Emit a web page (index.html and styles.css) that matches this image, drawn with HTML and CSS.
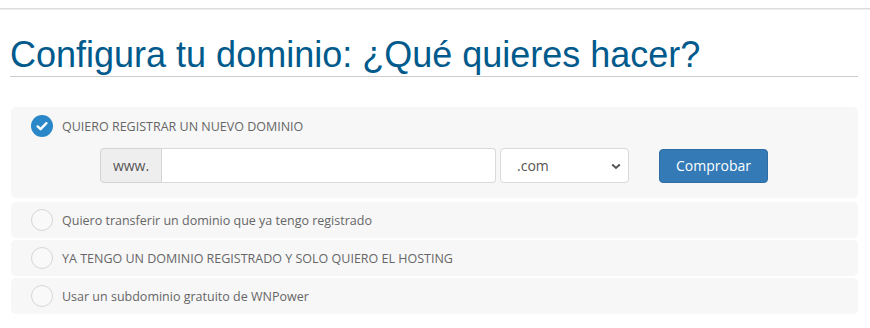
FILE: index.html
```html
<!DOCTYPE html>
<html lang="es">
<head>
  <meta charset="UTF-8" />
  <title>Configura tu dominio</title>
  <link rel="stylesheet" href="styles.css">
</head>
<body>
  <div class="topbar"></div>

  <div class="wrap">
    <h1 class="page-title">Configura tu dominio: ¿Qué quieres hacer?</h1>

    <div class="option option-open">
      <label class="option-head">
        <span class="check">
          <svg width="22" height="22" viewBox="0 0 22 22">
            <circle cx="11" cy="11" r="11" fill="#2b88c8" />
            <path d="M6.6 11.4 L9.6 14.2 L15.4 8.2" fill="none" stroke="#fff" stroke-width="2.4" stroke-linecap="round" stroke-linejoin="round" />
          </svg>
        </span>
        <span class="option-text">QUIERO REGISTRAR UN NUEVO DOMINIO</span>
      </label>

      <div class="domain-row">
        <div class="input-group">
          <span class="addon">www.</span>
          <input type="text" class="domain-input" />
        </div>
        <div class="select-wrap">
          <select class="tld">
            <option>.com</option>
            <option>.net</option>
            <option>.org</option>
          </select>
          <svg class="chevron" width="10" height="7" viewBox="0 0 10 7">
            <path d="M1.2 1.5 L5 5 L8.8 1.5" fill="none" stroke="#555" stroke-width="2" />
          </svg>
        </div>
        <button type="button" class="btn-check">Comprobar</button>
      </div>
    </div>

    <div class="option">
      <label class="option-head">
        <span class="radio"></span>
        <span class="option-text">Quiero transferir un dominio que ya tengo registrado</span>
      </label>
    </div>

    <div class="option">
      <label class="option-head">
        <span class="radio"></span>
        <span class="option-text">YA TENGO UN DOMINIO REGISTRADO Y SOLO QUIERO EL HOSTING</span>
      </label>
    </div>

    <div class="option">
      <label class="option-head">
        <span class="radio"></span>
        <span class="option-text">Usar un subdominio gratuito de WNPower</span>
      </label>
    </div>
  </div>
</body>
</html>
```

FILE: styles.css
```css
*, *::before, *::after { box-sizing: border-box; }

body {
  margin: 0;
  padding-top: 8px;
  font-family: 'Open Sans', 'Liberation Sans', sans-serif;
  background-color: #ffffff;
  color: #555;
}

.topbar {
  height: 2px;
  border-top: 1px solid #dcdcdc;
  border-bottom: 1px solid #ededed;
}

.wrap {
  width: 847px;
  margin-left: 11px;
}

.page-title {
  margin: 25px 0 0 -1px;
  padding-bottom: 1px;
  border-bottom: 1px solid #cccccc;
  font-family: 'Liberation Sans', Arial, sans-serif;
  font-weight: normal;
  font-size: 36px;
  line-height: 40px;
  color: #005a8c;
}

.option {
  background-color: #f7f7f7;
  border-radius: 5px;
  height: 36px;
  margin-bottom: 2px;
  padding: 7px 20px 0;
}

.option-open {
  margin-top: 30px;
  height: 91px;
  margin-bottom: 4px;
  padding-top: 8px;
}

.option-head {
  display: flex;
  align-items: center;
  gap: 9px;
  height: 22px;
  cursor: pointer;
}

.check, .radio {
  width: 22px;
  height: 22px;
  flex: none;
}

.check svg { display: block; }

.radio {
  border: 1px solid #d6d6d6;
  border-radius: 50%;
  background-color: #f9f9f9;
}

.option-text {
  font-size: 12.5px;
  color: #666;
}

.domain-row {
  display: flex;
  align-items: center;
  margin: 11px 0 0 69px;
}

.input-group {
  display: flex;
  height: 35px;
}

.addon {
  width: 62px;
  display: flex;
  align-items: center;
  justify-content: center;
  background-color: #eeeeee;
  border: 1px solid #d4d4d4;
  border-radius: 4px 0 0 4px;
  font-size: 14px;
  color: #555;
}

.domain-input {
  width: 334px;
  height: 35px;
  border: 1px solid #d9d9d9;
  border-left: none;
  border-radius: 0 4px 4px 0;
  background: #fff;
  font-family: inherit;
  font-size: 14px;
  outline: none;
}

.select-wrap {
  position: relative;
  margin-left: 4px;
}

.tld {
  appearance: none;
  -webkit-appearance: none;
  width: 129px;
  height: 35px;
  padding: 0 16px;
  border: 1px solid #d9d9d9;
  border-radius: 4px;
  background: #fff;
  font-family: inherit;
  font-size: 14px;
  color: #555;
  display: block;
}

.chevron {
  position: absolute;
  right: 8px;
  top: 15px;
  pointer-events: none;
}

.btn-check {
  margin-left: 30px;
  width: 109px;
  height: 34px;
  border: 1px solid #2e6da4;
  border-radius: 4px;
  background-color: #337ab7;
  color: #fff;
  font-family: inherit;
  font-size: 14px;
  cursor: pointer;
}

.btn-check:hover { background-color: #286090; }
```
